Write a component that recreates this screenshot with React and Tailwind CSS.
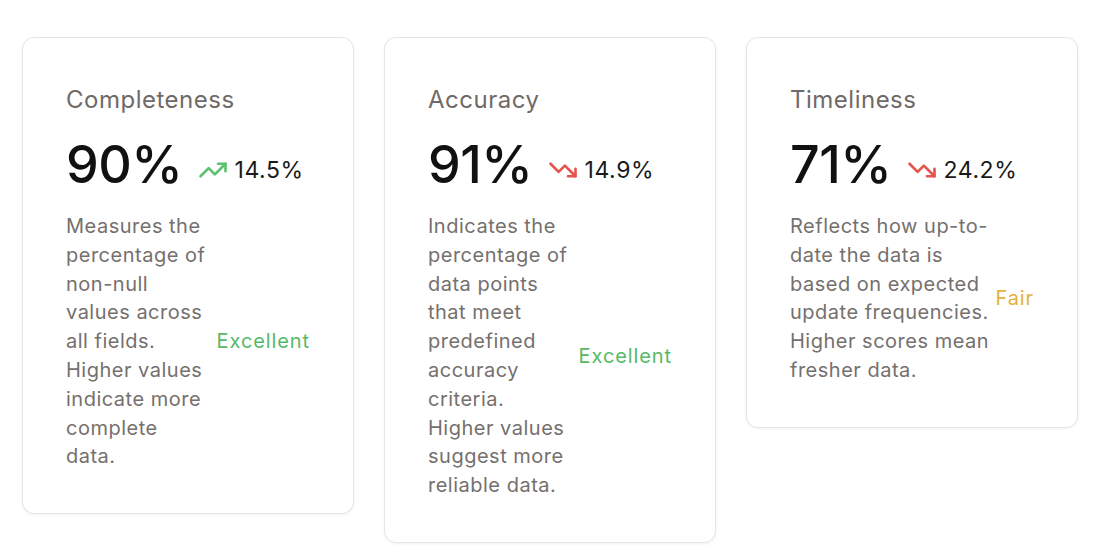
import React from "react";

function TrendUp({ className }) {
  return (
    <svg className={className} viewBox="0 0 24 24" fill="none" stroke="currentColor" strokeWidth="2.1" strokeLinecap="round" strokeLinejoin="round">
      <polyline points="22 7 13.5 15.5 8.5 10.5 2 17" />
      <polyline points="16 7 22 7 22 13" />
    </svg>
  );
}

function TrendDown({ className }) {
  return (
    <svg className={className} viewBox="0 0 24 24" fill="none" stroke="currentColor" strokeWidth="2.1" strokeLinecap="round" strokeLinejoin="round">
      <polyline points="22 17 13.5 8.5 8.5 13.5 2 7" />
      <polyline points="16 17 22 17 22 11" />
    </svg>
  );
}

const cards = [
  {
    title: "Completeness",
    value: "90%",
    up: true,
    delta: "14.5%",
    desc: "Measures the percentage of non-null values across all fields. Higher values indicate more complete data.",
    badge: "Excellent",
    badgeClass: "text-[#56b968]",
  },
  {
    title: "Accuracy",
    value: "91%",
    up: false,
    delta: "14.9%",
    desc: "Indicates the percentage of data points that meet predefined accuracy criteria. Higher values suggest more reliable data.",
    badge: "Excellent",
    badgeClass: "text-[#56b968]",
  },
  {
    title: "Timeliness",
    value: "71%",
    up: false,
    delta: "24.2%",
    desc: "Reflects how up-to-date the data is based on expected update frequencies. Higher scores mean fresher data.",
    badge: "Fair",
    badgeClass: "text-[#e5b13b]",
  },
];

export default function App() {
  return (
    <div className="min-h-screen bg-white pl-[22px] pt-[37px] font-['Inter',sans-serif]">
      <div className="grid grid-cols-[332px_332px_332px] items-start gap-[30px]">
        {cards.map((c) => (
          <div key={c.title} className="rounded-xl border border-[#e6e6e6] bg-white px-[43px] pt-[46px] pb-[42px] shadow-[0_1px_3px_rgba(0,0,0,0.06)]">
            <div className="text-[24px] leading-[32px] tracking-[0.5px] text-[#6f6a67]">{c.title}</div>
            <div className="mt-[23px] flex items-center">
              <span className="text-[52px] leading-[52px] font-medium tracking-[-0.5px] text-[#111]">{c.value}</span>
              <span className="ml-[16px] mt-[10px] flex items-center gap-[6px]">
                {c.up ? (
                  <TrendUp className="h-[30px] w-[30px] text-[#5cc16d]" />
                ) : (
                  <TrendDown className="h-[30px] w-[30px] text-[#e5534f]" />
                )}
                <span className="text-[23px] leading-[28px] tracking-[0.6px] text-[#1a1a1a]">{c.delta}</span>
              </span>
            </div>
            <div className="mt-[21px] flex items-center justify-between gap-[4px]">
              <p className="text-[20px] leading-[28.8px] tracking-[0.5px] text-[#75706d]">{c.desc}</p>
              <span className={`text-[20px] leading-[28.8px] tracking-[0.9px] ${c.badgeClass}`}>{c.badge}</span>
            </div>
          </div>
        ))}
      </div>
    </div>
  );
}
